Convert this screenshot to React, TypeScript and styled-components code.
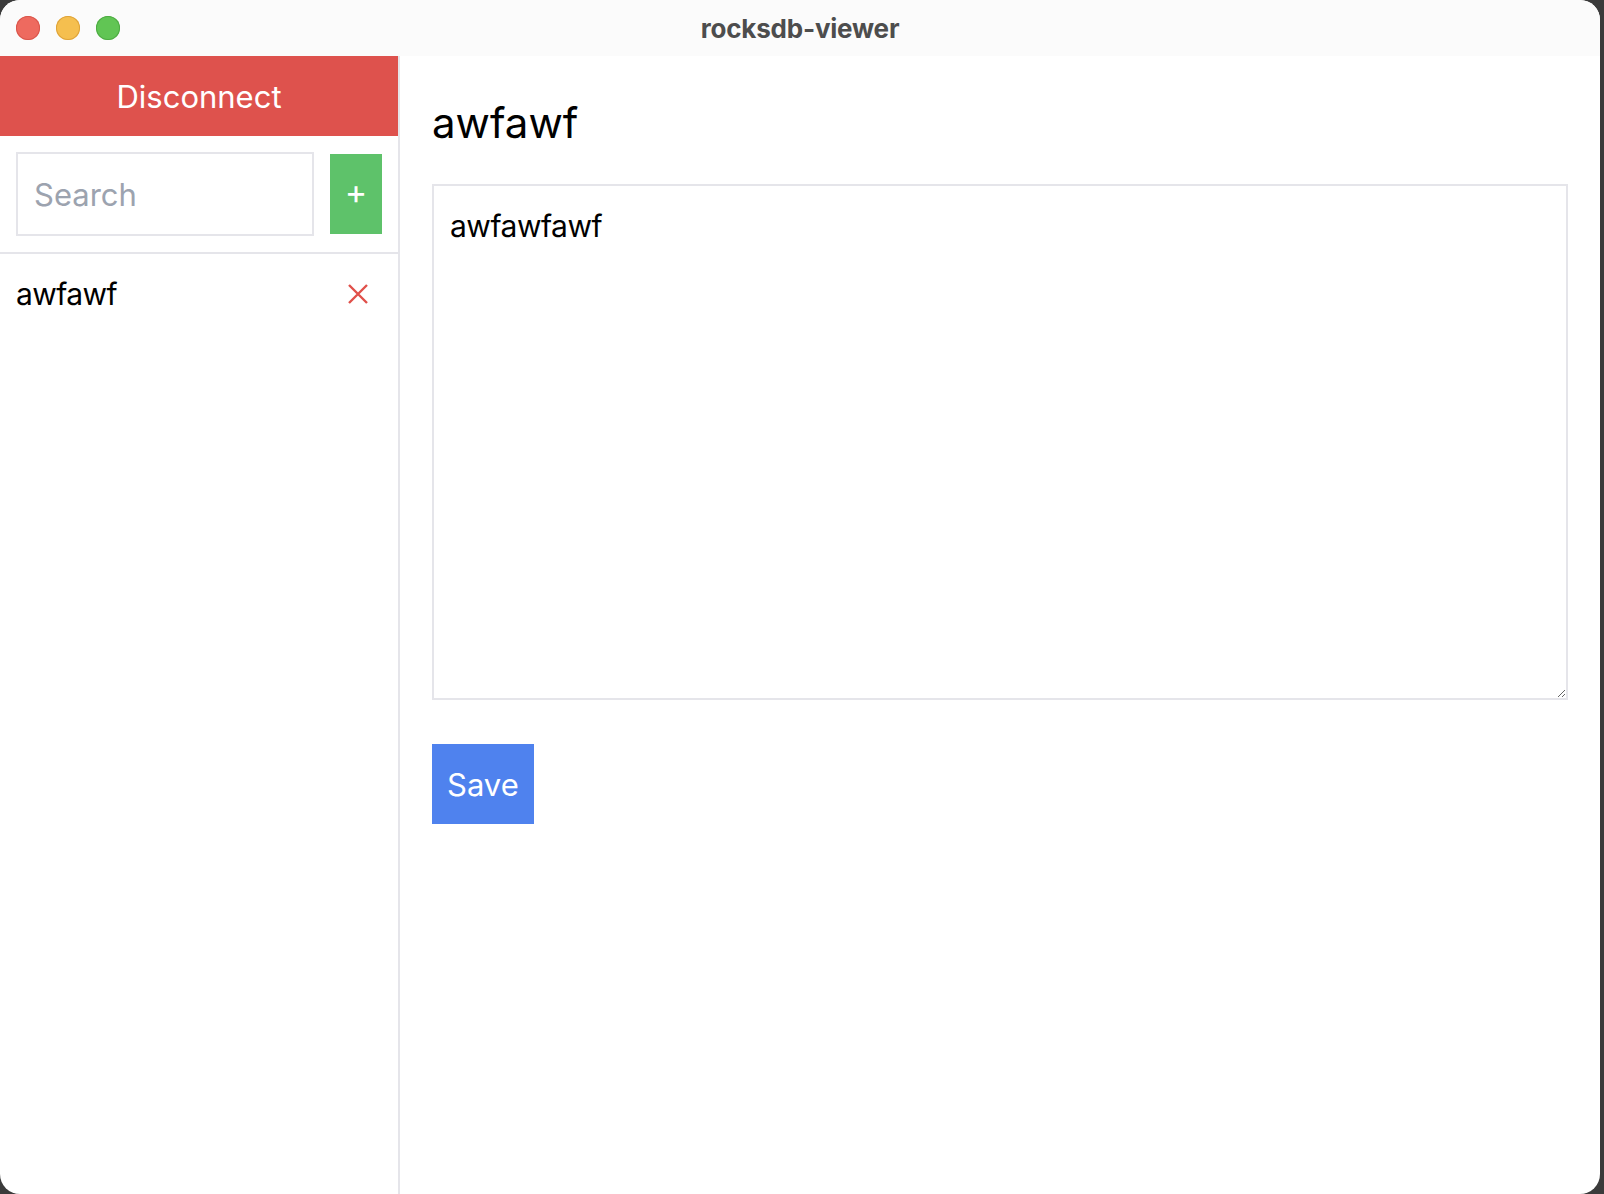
import React, { useState } from 'react';
import styled, { createGlobalStyle } from 'styled-components';

const GlobalStyle = createGlobalStyle`
  html, body {
    margin: 0;
    padding: 0;
    background: #3b3b3b;
  }
  * {
    box-sizing: border-box;
  }
  body {
    font-family: Inter, "Noto Sans", "Liberation Sans", sans-serif;
  }
`;

const Window = styled.div`
  width: 1600px;
  height: 1194px;
  background: #ffffff;
  border-radius: 20px;
  overflow: hidden;
  display: flex;
  flex-direction: column;
`;

const TitleBar = styled.div`
  position: relative;
  height: 56px;
  flex: 0 0 56px;
  background: #fbfbfb;
  display: flex;
  align-items: center;
  justify-content: center;
`;

const Lights = styled.div`
  position: absolute;
  left: 16px;
  top: 16px;
  display: flex;
  gap: 16px;
`;

const Light = styled.span<{ color: string; edge: string }>`
  width: 24px;
  height: 24px;
  border-radius: 50%;
  background: ${p => p.color};
  box-shadow: inset 0 0 0 1px ${p => p.edge};
`;

const Title = styled.div`
  font-size: 26px;
  font-weight: 700;
  color: #4d4d4d;
  letter-spacing: -0.2px;
`;

const Body = styled.div`
  flex: 1;
  display: flex;
  min-height: 0;
`;

const Sidebar = styled.aside`
  width: 400px;
  flex: 0 0 400px;
  border-right: 2px solid #e5e5ea;
  display: flex;
  flex-direction: column;
`;

const DisconnectButton = styled.button`
  height: 80px;
  border: none;
  background: #de524d;
  color: #ffffff;
  font-family: inherit;
  font-size: 31px;
  cursor: pointer;
`;

const SearchRow = styled.div`
  display: flex;
  align-items: center;
  gap: 16px;
  padding: 16px;
  border-bottom: 2px solid #e5e5ea;
`;

const SearchInput = styled.input`
  flex: 1;
  min-width: 0;
  height: 84px;
  border: 2px solid #e5e5ea;
  padding: 0 16px;
  font-family: inherit;
  font-size: 31px;
  color: #111;
  outline: none;

  &::placeholder {
    color: #9ca3af;
  }
`;

const AddButton = styled.button`
  width: 52px;
  height: 80px;
  flex: 0 0 52px;
  border: none;
  background: #5ec26a;
  color: #ffffff;
  font-family: inherit;
  font-size: 34px;
  line-height: 1;
  padding: 0 0 4px;
  cursor: pointer;
`;

const KeyList = styled.ul`
  list-style: none;
  margin: 0;
  padding: 0;
`;

const KeyItem = styled.li`
  display: flex;
  align-items: center;
  justify-content: space-between;
  padding: 16px 30px 16px 16px;
  font-size: 30px;
  letter-spacing: -0.6px;
  line-height: 48px;
  color: #000;
`;

const DeleteButton = styled.button`
  display: flex;
  border: none;
  background: none;
  padding: 0;
  cursor: pointer;
`;

const Main = styled.main`
  flex: 1;
  padding: 32px;
  display: flex;
  flex-direction: column;
  align-items: flex-start;
`;

const Heading = styled.h1`
  margin: 10px 0 36px;
  font-size: 42px;
  line-height: 50px;
  font-weight: 400;
  color: #000;
`;

const ValueArea = styled.textarea`
  width: 100%;
  height: 516px;
  border: 2px solid #e5e5ea;
  padding: 16px;
  font-family: inherit;
  font-size: 30px;
  letter-spacing: -0.5px;
  line-height: 48px;
  color: #000;
  outline: none;
  resize: both;
`;

const SaveButton = styled.button`
  margin-top: 44px;
  height: 80px;
  padding: 0 15px;
  border: none;
  background: #4f82ee;
  color: #ffffff;
  font-family: inherit;
  font-size: 31px;
  cursor: pointer;
`;

const CloseIcon = () => (
  <svg width="20" height="20" viewBox="0 0 20 20">
    <path d="M1 1L19 19M19 1L1 19" stroke="#e0504a" strokeWidth="2.4" strokeLinecap="butt" />
  </svg>
);

export default function App() {
  const [value, setValue] = useState('awfawfawf');

  return (
    <>
      <GlobalStyle />
      <Window>
        <TitleBar>
          <Lights>
            <Light color="#ee6a5f" edge="#d9564c" />
            <Light color="#f5bf4f" edge="#dea33a" />
            <Light color="#61c554" edge="#4eab43" />
          </Lights>
          <Title>rocksdb-viewer</Title>
        </TitleBar>
        <Body>
          <Sidebar>
            <DisconnectButton>Disconnect</DisconnectButton>
            <SearchRow>
              <SearchInput placeholder="Search" />
              <AddButton>+</AddButton>
            </SearchRow>
            <KeyList>
              <KeyItem>
                <span>awfawf</span>
                <DeleteButton aria-label="delete">
                  <CloseIcon />
                </DeleteButton>
              </KeyItem>
            </KeyList>
          </Sidebar>
          <Main>
            <Heading>awfawf</Heading>
            <ValueArea value={value} onChange={e => setValue(e.target.value)} />
            <SaveButton>Save</SaveButton>
          </Main>
        </Body>
      </Window>
    </>
  );
}
